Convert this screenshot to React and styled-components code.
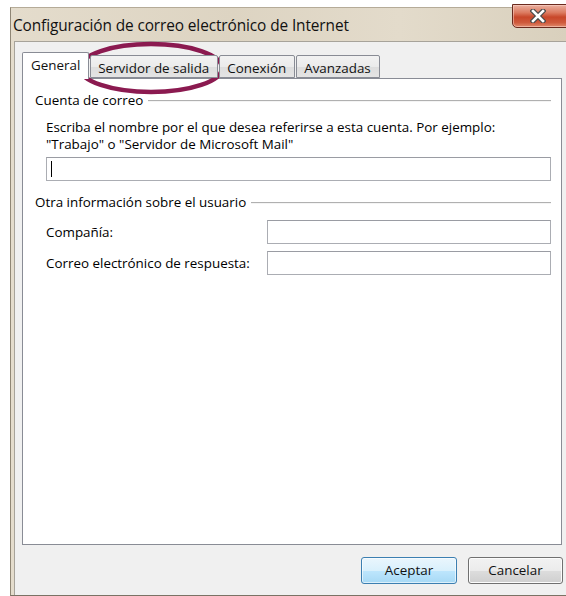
import React from "react";
import styled, { createGlobalStyle } from "styled-components";

const GlobalStyle = createGlobalStyle`
  html, body {
    margin: 0;
    padding: 0;
    background: #ffffff;
  }
  body {
    width: 566px;
    height: 596px;
    overflow: hidden;
    font-family: "Open Sans", "Noto Sans", "Liberation Sans", sans-serif;
    color: #000;
    -webkit-font-smoothing: antialiased;
  }
  * { box-sizing: border-box; }
`;

const Page = styled.div`
  position: relative;
  height: 596px;
  padding: 7px 0 0 10px;
  display: flex;
`;

const Window = styled.div`
  position: relative;
  flex: 1;
  display: flex;
  flex-direction: column;
  background: linear-gradient(90deg, #e4dccc 0%, #ddd4c2 40%, #e3dbcb 70%, #d9d0bd 100%);
  border-left: 1px solid #8f8675;
  border-top: 1px solid #b5ab98;
  border-bottom: 1px solid #7a7264;
`;

const TitleBar = styled.div`
  height: 33px;
  display: flex;
  align-items: center;
  padding: 1px 0 0 2px;
  font-size: 15.4px;
  letter-spacing: -0.1px;
  color: #111;
`;

const CloseButton = styled.div`
  position: absolute;
  top: -4px;
  right: -8px;
  width: 62px;
  height: 24px;
  border: 1px solid #6a2a1e;
  border-radius: 0 0 5px 5px;
  background: linear-gradient(#eab0a0 0%, #dc7a60 35%, #c8472a 55%, #cf5a3c 80%, #e08a6c 100%);
  box-shadow: inset 0 0 0 1px rgba(255, 220, 210, 0.5);
  display: flex;
  align-items: center;
  justify-content: center;
  padding-right: 10px;
`;

const Client = styled.div`
  flex: 1;
  margin-left: 3px;
  background: #f0f0f0;
  border-left: 1px solid #a7a39a;
  border-top: 1px solid #a7a39a;
  padding: 8px 4px 0 7px;
  display: flex;
  flex-direction: column;
  font-size: 13.4px;
`;

const TabStrip = styled.div`
  display: flex;
  align-items: flex-end;
  height: 28px;
  position: relative;
  z-index: 1;
`;

const Tab = styled.div`
  height: ${(p) => (p.$active ? "27px" : "23px")};
  margin-bottom: ${(p) => (p.$active ? "-1px" : "0")};
  margin-right: 1px;
  padding: ${(p) => (p.$active ? "3px 8px 0 8px" : "3px 8px 0 7px")};
  border: 1px solid #898c95;
  border-bottom: ${(p) => (p.$active ? "none" : "1px solid #898c95")};
  border-radius: 2px 2px 0 0;
  background: ${(p) =>
    p.$active
      ? "#ffffff"
      : "linear-gradient(#f2f2f2 0%, #ebebeb 50%, #dddddd 51%, #e4e4e4 100%)"};
  white-space: nowrap;
  line-height: 18px;
  color: #111;
`;

const Panel = styled.div`
  height: 467px;
  background: #ffffff;
  border: 1px solid #898c95;
  padding: 13px 10px 0 12px;
  display: flex;
  flex-direction: column;
`;

const Group = styled.section`
  display: flex;
  flex-direction: column;
  margin-top: ${(p) => p.$top || "0"};
`;

const Legend = styled.div`
  display: flex;
  align-items: center;
  gap: 5px;
  line-height: 17px;
  white-space: nowrap;

  &::after {
    content: "";
    flex: 1;
    height: 0;
    border-top: 1px solid #b0b0b0;
    border-bottom: 1px solid #f4f4f4;
    margin-top: 1px;
  }
`;

const GroupBody = styled.div`
  padding-left: 11px;
  display: flex;
  flex-direction: column;
`;

const Description = styled.p`
  margin: 10px 0 0;
  line-height: 16.5px;
`;

const TextField = styled.div`
  position: relative;
  height: 24px;
  background: #ffffff;
  border: 1px solid #abadb3;
  border-top-color: #9a9ca3;
  margin-top: ${(p) => p.$top || "0"};
`;

const Caret = styled.span`
  position: absolute;
  left: 4px;
  top: 3px;
  width: 1px;
  height: 16px;
  background: #000;
`;

const FieldGrid = styled.div`
  display: grid;
  grid-template-columns: 221px 1fr;
  row-gap: 7px;
  align-items: center;
  margin-top: 9px;
`;

const FieldLabel = styled.label`
  line-height: 17px;
  white-space: nowrap;
`;

const ButtonRow = styled.div`
  display: flex;
  justify-content: flex-end;
  gap: 11px;
  margin: 12px -1px 0 0;
`;

const DialogButton = styled.button`
  width: ${(p) => p.$width};
  height: 27px;
  font: inherit;
  font-size: 13.4px;
  color: #111;
  border-radius: 3px;
  border: 1px solid ${(p) => (p.$default ? "#3c7fb1" : "#707070")};
  background: ${(p) =>
    p.$default
      ? "linear-gradient(#eaf6fd 0%, #d9f0fc 50%, #bee6fd 51%, #a7d9f5 100%)"
      : "linear-gradient(#f2f2f2 0%, #ebebeb 50%, #dddddd 51%, #cfcfcf 100%)"};
  box-shadow: inset 0 0 0 1px ${(p) => (p.$default ? "rgba(255,255,255,0.6)" : "#fcfcfc")};
  padding: 0 0 1px;
`;

const Highlight = styled.svg`
  position: absolute;
  left: 78px;
  top: 42px;
  overflow: visible;
  pointer-events: none;
`;

const CloseGlyph = () => (
  <svg width="16" height="14" viewBox="0 0 16 14">
    <path
      d="M3 2 L13 12 M13 2 L3 12"
      stroke="#4a4a4a"
      strokeWidth="5"
      strokeLinecap="square"
    />
    <path
      d="M3 2 L13 12 M13 2 L3 12"
      stroke="#ffffff"
      strokeWidth="2.6"
      strokeLinecap="square"
    />
  </svg>
);

const tabs = ["General", "Servidor de salida", "Conexión", "Avanzadas"];

export default function App() {
  return (
    <>
      <GlobalStyle />
      <Page>
        <Window>
          <TitleBar>Configuración de correo electrónico de Internet</TitleBar>
          <CloseButton>
            <CloseGlyph />
          </CloseButton>
          <Client>
            <TabStrip>
              {tabs.map((t, i) => (
                <Tab key={t} $active={i === 0}>
                  {t}
                </Tab>
              ))}
            </TabStrip>
            <Panel>
              <Group>
                <Legend>Cuenta de correo</Legend>
                <GroupBody>
                  <Description>
                    Escriba el nombre por el que desea referirse a esta cuenta. Por ejemplo:
                    <br />
                    "Trabajo" o "Servidor de Microsoft Mail"
                  </Description>
                  <TextField $top="5px">
                    <Caret />
                  </TextField>
                </GroupBody>
              </Group>
              <Group $top="13px">
                <Legend>Otra información sobre el usuario</Legend>
                <GroupBody>
                  <FieldGrid>
                    <FieldLabel>Compañía:</FieldLabel>
                    <TextField />
                    <FieldLabel>Correo electrónico de respuesta:</FieldLabel>
                    <TextField />
                  </FieldGrid>
                </GroupBody>
              </Group>
            </Panel>
            <ButtonRow>
              <DialogButton $default $width="96px">Aceptar</DialogButton>
              <DialogButton $width="95px">Cancelar</DialogButton>
            </ButtonRow>
          </Client>
        </Window>
        <Highlight width="146" height="52" viewBox="0 0 146 52">
          <ellipse cx="73" cy="26" rx="71" ry="24" fill="none" stroke="#8b1a50" strokeWidth="4.5" />
        </Highlight>
      </Page>
    </>
  );
}
